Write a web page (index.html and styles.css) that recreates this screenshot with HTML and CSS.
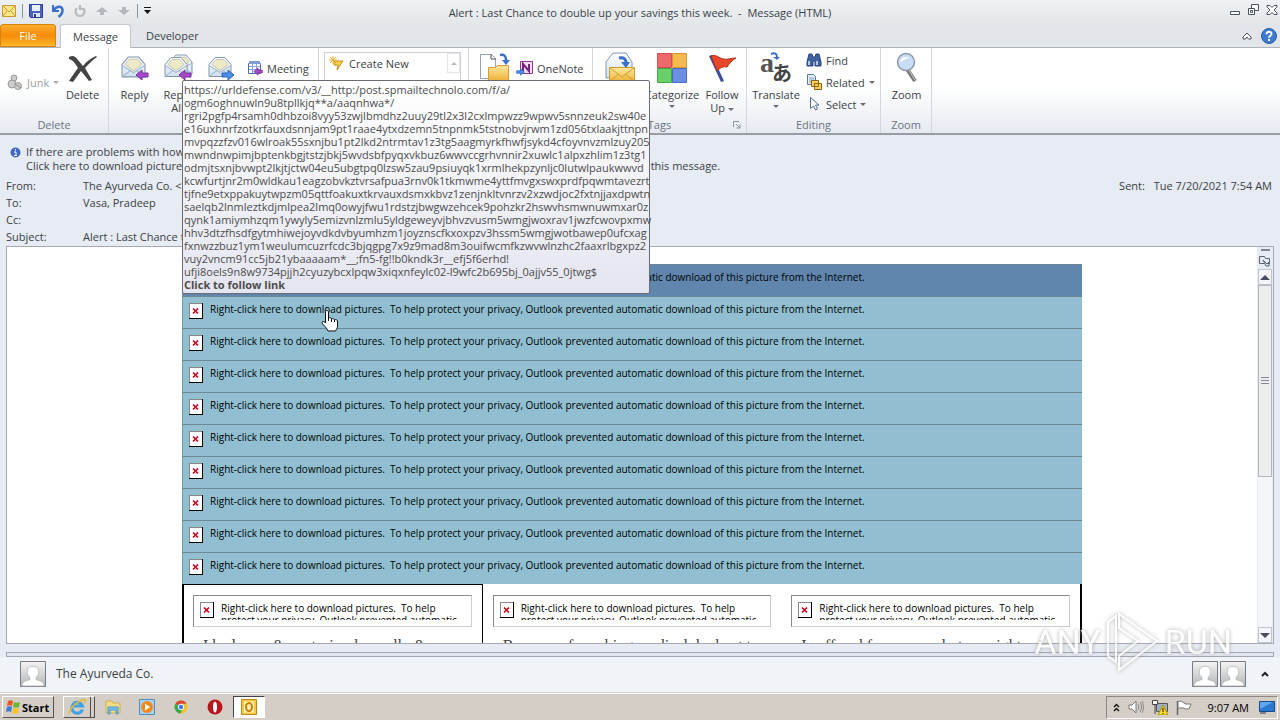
FILE: index.html
```html
<!DOCTYPE html>
<html lang="en">
<head>
    <meta charset="utf-8">
    <title>Alert : Last Chance to double up your savings this week. - Message (HTML)</title>
    <link rel="stylesheet" href="styles.css">
</head>
<body>

    <!-- Shared icons -->
    <svg class="defs" width="0" height="0">
        <defs>
            <linearGradient id="paper" x1="0" y1="0" x2="0" y2="1"><stop offset="0" stop-color="#fff"/><stop offset="1" stop-color="#cfdff0"/></linearGradient>
            <linearGradient id="gold" x1="0" y1="0" x2="0" y2="1"><stop offset="0" stop-color="#ffe9a0"/><stop offset="1" stop-color="#eeb138"/></linearGradient>
            <linearGradient id="person-bg" x1="0" y1="0" x2="0" y2="1"><stop offset="0" stop-color="#f4f4f4"/><stop offset="1" stop-color="#b4b5b8"/></linearGradient>
            <symbol id="envelope" viewBox="0 0 24 24">
                <path d="M1 9 7 2h10l6 7v12H1z" fill="url(#paper)" stroke="#8196ad"/>
                <path d="M4 9 8 4h8l4 5-8 6z" fill="#eee9c6" stroke="#b8b8a0" stroke-width=".7"/>
                <path d="M1 10l11 7 11-7M1 21l8-6M23 21l-8-6" fill="none" stroke="#9cb0c6"/>
            </symbol>
            <symbol id="arrow-left" viewBox="0 0 14 12"><path d="M1 6l6-5v3h6v4H7v3z" fill="#a64bc8" stroke="#7b2fa0"/></symbol>
            <symbol id="arrow-right" viewBox="0 0 14 12"><path d="M13 6 7 1v3H1v4h6v3z" fill="#4b8ee6" stroke="#2b62b8"/></symbol>
            <symbol id="person" viewBox="0 0 26 26">
                <path d="M.5.5h25v25H.5z" fill="url(#person-bg)" stroke="#777b82"/>
                <path d="M2 25c0-5 4-5 8-6.500v-2C7 14 7 11 7.500 9 8.500 4 17.500 4 18.500 9c.5 2 .5 5-2.500 7.500v2c4 1.500 8 1.500 8 6.500z" fill="#fff" stroke="#aaa" stroke-width=".7"/>
            </symbol>
            <symbol id="broken" viewBox="0 0 14 16">
                <path d="M0 0h14v16H0z" fill="#000"/><path d="M0 0h13v15H0z" fill="#888"/><path d="M1 1h12v14H1z" fill="#fff"/>
                <path d="M4 5.500l5 5M9 5.500l-5 5" stroke="#d0021b" stroke-width="1.700"/>
            </symbol>
        </defs>
    </svg>

    <!-- Title bar -->
    <header class="titlebar">
        <div class="quick-access">
            <svg width="14" height="12" viewBox="0 0 14 12"><path d="M.5.5h13v11H.5z" fill="#ffe58a" stroke="#c99a2e"/><path d="M1 1l6 6 6-6M1 11l4-5M13 11 9 6" fill="none" stroke="#c99a2e"/></svg>
            <span class="bar"></span>
            <button aria-label="Save"><svg width="14" height="14" viewBox="0 0 14 14"><path d="M.5.5h13v13h-12l-1-1z" fill="#4a62c4" stroke="#2b3d96"/><path d="M3 1h8v6H3z" fill="#e8f0fb"/><path d="M4 9h7v4H4z" fill="#dfe4f2"/><path d="M5 10h2v3H5z" fill="#2b3d96"/></svg></button>
            <button aria-label="Undo"><svg width="14" height="14" viewBox="0 0 14 14"><path d="M2 1v6h6" fill="none" stroke="#3a6fcb" stroke-width="2"/><path d="M2.500 6.500C5 2 11 1 11.500 6c.3 3-1.500 5-4 7" fill="none" stroke="#3a6fcb" stroke-width="2.500"/></svg></button>
            <button aria-label="Redo"><svg width="14" height="14" viewBox="0 0 14 14"><path d="M4 4C1 7 3 12 7 12s6-5 3-8M7 1v4h5" fill="none" stroke="#bbb" stroke-width="2.200"/></svg></button>
            <button aria-label="Previous item"><svg width="14" height="10" viewBox="0 0 14 10"><path d="M7 1l6 5H9v3H5V6H1z" fill="#b4b7bb"/></svg></button>
            <button aria-label="Next item"><svg width="14" height="10" viewBox="0 0 14 10"><path d="M7 9l6-5H9V1H5v3H1z" fill="#b4b7bb"/></svg></button>
            <span class="bar"></span>
            <button class="customize" aria-label="Customize"><svg width="7" height="8" viewBox="0 0 7 8"><path d="M0 0h7v1H0zM0 3h7L3.500 7z" fill="#111"/></svg></button>
        </div>
        <h1>Alert : Last Chance to double up your savings this week. &nbsp;- &nbsp;Message (HTML)</h1>
        <div class="window-buttons">
            <button aria-label="Minimize"><svg width="12" height="12" viewBox="0 0 12 12"><path d="M1.500 7.500h9v3h-9z" fill="#fff" stroke="#4c535c"/></svg></button>
            <button aria-label="Restore"><svg width="13" height="12" viewBox="0 0 13 12"><path d="M4.500.5h7v6h-7z" fill="#fff" stroke="#4c535c"/><path d="M1.500 4.500h6v6h-6zM3.500 6.500h2v2h-2z" fill="#fff" stroke="#4c535c"/></svg></button>
            <button aria-label="Close"><svg width="12" height="12" viewBox="0 0 12 12"><path d="M1 1.500h3l2 2 2-2h3v1.500L8 6l3 3v1.500H8l-2-2-2 2H1V9l3-3-3-3z" fill="#fff" stroke="#4c535c"/></svg></button>
        </div>
    </header>

    <!-- Tabs -->
    <nav class="tabs">
        <button class="file">File</button>
        <button class="active">Message</button>
        <button class="developer">Developer</button>
        <div class="help">
            <svg width="10" height="8" viewBox="0 0 10 8"><path d="M1 5l4-4 4 4v2H6.500L5 5 3.500 7H1z" fill="#fff" stroke="#4c535c"/></svg>
            <svg width="16" height="16" viewBox="0 0 16 16"><circle cx="8" cy="8" r="7.500" fill="#3f7bd0" stroke="#285aa5"/><path d="M5.500 6.200C5.500 3 10.500 3 10.500 6c0 1.800-2.500 1.800-2.500 3.800M8 11v2" fill="none" stroke="#fff" stroke-width="1.900"/></svg>
        </div>
    </nav>

    <!-- Ribbon -->
    <section class="ribbon">
        <div class="group g-delete">
            <div class="tools">
                <button class="small junk"><svg width="16" height="16" viewBox="0 0 16 16"><g fill="#ccc" stroke="#999"><circle cx="7" cy="4" r="3"/><circle cx="5" cy="10" r="4"/><circle cx="11" cy="12" r="3.500"/></g><path d="M8 10l6 4" stroke="#888"/></svg>Junk <i class="caret"></i></button>
                <button class="large"><svg width="32" height="32" viewBox="0 0 32 32"><path d="M2 5c4-2 6-1 9 3l5 6c4-5 8-8 13-10l1 1c-5 3-8 7-12 11l7 12-3 1-8-10-8 11-4-1c3-5 6-9 9-13C8 11 6 8 2 7z" fill="#444"/></svg>Delete</button>
            </div>
            <div class="caption">Delete</div>
        </div>
        <div class="group g-respond">
            <div class="tools">
                <button class="large"><svg width="32" height="32" viewBox="0 0 32 32"><use href="#envelope" x="2" y="3" width="25" height="25"/><use href="#arrow-left" x="16" y="17" width="14" height="12"/></svg>Reply</button>
                <button class="large"><svg width="32" height="32" viewBox="0 0 32 32"><use href="#envelope" x="7" y="1" width="24" height="24"/><use href="#envelope" x="2" y="3" width="24" height="25"/><use href="#arrow-left" x="16" y="17" width="14" height="12"/></svg>Reply<br>All</button>
                <button class="large"><svg width="32" height="32" viewBox="0 0 32 32"><use href="#envelope" x="3" y="3" width="24" height="25"/><use href="#arrow-right" x="16" y="17" width="14" height="12"/></svg>Forward</button>
                <button class="small meeting"><svg width="16" height="16" viewBox="0 0 16 16"><path d="M1.500 3.500h12v10h-12z" fill="#fff" stroke="#4c6fae"/><path d="M2 6.500h11M2 9.500h11M5.500 4v9M9.500 4v9" stroke="#8aa6d4"/><path d="M2 1h11v3H2z" fill="#7f9cd0"/><use href="#arrow-left" x="6" y="7" width="10" height="9"/></svg>Meeting</button>
            </div>
            <div class="caption">Respond</div>
        </div>
        <div class="group g-quick">
            <div class="tools">
                <div class="gallery">
                    <button class="small"><svg width="16" height="16" viewBox="0 0 16 16"><path d="M5 6h9l-6 9 1-5H5z" fill="#f6cf4a" stroke="#c98e1c"/><path d="M4 1v8M0 5h8M1 2l6 6M7 2 1 8" stroke="#e6b22c"/></svg>Create New</button>
                    <button class="up" aria-label="Scroll up"><i class="caret"></i></button>
                </div>
            </div>
            <div class="caption">Quick Steps</div>
        </div>
        <div class="group g-move">
            <div class="tools">
                <button class="large"><svg width="32" height="32" viewBox="0 0 32 32"><path d="M1.500 2.500h11l4 4v20h-15z" fill="#fff" stroke="#93a3b5"/><path d="M12 2v5h5" fill="none" stroke="#555"/><path d="M9.500 15.500h7l2-2h11v15h-20z" fill="url(#gold)" stroke="#dc9a3a"/><path d="M21 3c4-1 6 1 6 5" fill="none" stroke="#3a6fcb" stroke-width="2.500"/><path d="M23 8h8l-4 5z" fill="#3a6fcb"/></svg>Move</button>
                <button class="small"><svg width="17" height="16" viewBox="0 0 17 16"><path d="M4.500 1.500h12v12h-12z" fill="#f4dcf0" stroke="#8c3c94"/><path d="M7 11V4l6 7V4" fill="none" stroke="#7a2282" stroke-width="2"/><use href="#arrow-right" x="0" y="8" width="9" height="8"/></svg>OneNote</button>
            </div>
            <div class="caption">Move</div>
        </div>
        <div class="group g-tags">
            <div class="tools">
                <button class="large"><svg width="32" height="32" viewBox="0 0 32 32"><path d="M2 10 9 1h13l6 9v16H2z" fill="url(#paper)" stroke="#8196ad"/><path d="M5.500 15.500h25v14h-25z" fill="url(#gold)" stroke="#d29b29"/><path d="M6 16l12 9 12-9M6 29l9-7M30 29l-9-7" fill="none" stroke="#d29b29"/><path d="M15 6c5-1 7 1 7 5" fill="none" stroke="#3a6fcb" stroke-width="3"/><path d="M17 10h9l-4 6z" fill="#3a6fcb"/></svg>Unread</button>
                <button class="large"><svg width="32" height="32" viewBox="0 0 32 32"><path d="M1.500 1.500h14v14h-14z" fill="#ee6a6a" stroke="#d14b50"/><path d="M16.500 1.500h14v14h-14z" fill="#f5b951" stroke="#dc9526"/><path d="M1.500 16.500h14v14h-14z" fill="#6bd06c" stroke="#41a845"/><path d="M16.500 16.500h14v14h-14z" fill="#6c8fe4" stroke="#4769c9"/></svg>Categorize<i class="caret"></i></button>
                <button class="large"><svg width="32" height="32" viewBox="0 0 32 32"><path d="M3 4l3-1 12 26-3 1z" fill="#394e9c"/><path d="M5 4c5-2 8 2 12 3 5 1 8-1 13-1-4 2-7 6-9 9-4-1-7 1-10 4z" fill="#e8482a" stroke="#b02c17"/></svg>Follow<span>Up <i class="caret"></i></span></button>
            </div>
            <div class="caption">Tags</div>
            <svg class="launcher" width="8" height="8" viewBox="0 0 8 8"><path d="M.5 6V.5H6M3 3l4 4M7 3.500V7H3.500" fill="none" stroke="#8a9099"/></svg>
        </div>
        <div class="group g-editing">
            <div class="tools">
                <button class="large"><svg width="32" height="32" viewBox="0 0 32 32"><text x="0" y="20" class="glyph-a">a</text><text x="12" y="29" class="glyph-kana">あ</text><path d="M11 2c4-2 6 0 6 3" fill="none" stroke="#3a6fcb" stroke-width="2"/><path d="M13 5h7l-3 3z" fill="#3a6fcb"/></svg>Translate<i class="caret"></i></button>
                <div class="stack">
                    <button class="small"><svg width="16" height="16" viewBox="0 0 16 16"><path d="M3 2h3l1 3h2l1-3h3l2 8v4H9V9H7v5H1v-4z" fill="#40619f" stroke="#2a447c"/><path d="M3 9v4M11 9v4" stroke="#dbe6f7" stroke-width="1.500"/></svg>Find</button>
                    <button class="small"><svg width="16" height="16" viewBox="0 0 16 16"><path d="M1.500.5h6l2 2v8h-8z" fill="#e6effa" stroke="#5878ac"/><path d="M3 4h5M3 6h5M3 8h4" stroke="#7f9bc8"/><path d="M5.500 6.500h7v6h-7zM8.500 9.500h7v6h-7z" fill="#f7d05c" stroke="#8c6412"/></svg>Related <i class="caret"></i></button>
                    <button class="small"><svg width="16" height="16" viewBox="0 0 16 16"><path d="M4.500 1.500v11l3-2.500 2 4 2-1-2-4h3.500z" fill="#fff" stroke="#566b92"/></svg>Select <i class="caret"></i></button>
                </div>
            </div>
            <div class="caption">Editing</div>
        </div>
        <div class="group g-zoom">
            <div class="tools">
                <button class="large"><svg width="32" height="32" viewBox="0 0 32 32"><path d="M16 17l8 12" stroke="#777" stroke-width="4"/><path d="M17 17l7 11" stroke="#ccc"/><circle cx="15" cy="10" r="8.500" fill="#c9def5" stroke="#8e99a8" stroke-width="1.500"/><path d="M9 10c1-5 6-6 9-4-3 0-5 3-9 4z" fill="#fff"/></svg>Zoom</button>
            </div>
            <div class="caption">Zoom</div>
        </div>
    </section>

    <!-- Message header -->
    <section class="message-header">
        <div class="info">
            <svg width="11" height="11" viewBox="0 0 11 11"><circle cx="5.500" cy="5.500" r="5" fill="#3c6ac4"/><path d="M5.500 2v1.500M4 5h2v3.500M4 8.500h3" fill="none" stroke="#fff"/></svg>
            <p>If there are problems with how this message is displayed, click here to view it in a web browser.<br>Click here to download pictures. To help protect your privacy, Outlook prevented automatic download of some pictures in this message.</p>
        </div>
        <dl class="fields">
            <dt>From:</dt><dd>The Ayurveda Co. &lt;</dd>
            <dt>To:</dt><dd>Vasa, Pradeep</dd>
            <dt>Cc:</dt><dd></dd>
            <dt>Subject:</dt><dd>Alert : Last Chance to double up your savings this week.</dd>
        </dl>
        <p class="sent"><span>Sent:</span> Tue 7/20/2021 7:54 AM</p>
    </section>

    <!-- Message body -->
    <main class="message">
        <div class="page">
            <div class="banner">
                <a href="#"><svg width="14" height="16"><use href="#broken"/></svg>Right-click here to download pictures.&nbsp; To help protect your privacy, Outlook prevented automatic download of this picture from the Internet.</a>
                <a href="#"><svg width="14" height="16"><use href="#broken"/></svg>Right-click here to download pictures.&nbsp; To help protect your privacy, Outlook prevented automatic download of this picture from the Internet.</a>
                <a href="#"><svg width="14" height="16"><use href="#broken"/></svg>Right-click here to download pictures.&nbsp; To help protect your privacy, Outlook prevented automatic download of this picture from the Internet.</a>
                <a href="#"><svg width="14" height="16"><use href="#broken"/></svg>Right-click here to download pictures.&nbsp; To help protect your privacy, Outlook prevented automatic download of this picture from the Internet.</a>
                <a href="#"><svg width="14" height="16"><use href="#broken"/></svg>Right-click here to download pictures.&nbsp; To help protect your privacy, Outlook prevented automatic download of this picture from the Internet.</a>
                <a href="#"><svg width="14" height="16"><use href="#broken"/></svg>Right-click here to download pictures.&nbsp; To help protect your privacy, Outlook prevented automatic download of this picture from the Internet.</a>
                <a href="#"><svg width="14" height="16"><use href="#broken"/></svg>Right-click here to download pictures.&nbsp; To help protect your privacy, Outlook prevented automatic download of this picture from the Internet.</a>
                <a href="#"><svg width="14" height="16"><use href="#broken"/></svg>Right-click here to download pictures.&nbsp; To help protect your privacy, Outlook prevented automatic download of this picture from the Internet.</a>
                <a href="#"><svg width="14" height="16"><use href="#broken"/></svg>Right-click here to download pictures.&nbsp; To help protect your privacy, Outlook prevented automatic download of this picture from the Internet.</a>
                <a href="#"><svg width="14" height="16"><use href="#broken"/></svg>Right-click here to download pictures.&nbsp; To help protect your privacy, Outlook prevented automatic download of this picture from the Internet.</a>
            </div>
            <div class="columns">
                <article>
                    <div class="placeholder"><svg width="14" height="16"><use href="#broken"/></svg><p>Right-click here to download pictures.&nbsp; To help<br>protect your privacy, Outlook prevented automatic</p></div>
                    <p class="quote">I had acne &amp; post-pimple, really &amp;</p>
                </article>
                <article>
                    <div class="placeholder"><svg width="14" height="16"><use href="#broken"/></svg><p>Right-click here to download pictures.&nbsp; To help<br>protect your privacy, Outlook prevented automatic</p></div>
                    <p class="quote">Because of combing medical, had cut to</p>
                </article>
                <article>
                    <div class="placeholder"><svg width="14" height="16"><use href="#broken"/></svg><p>Right-click here to download pictures.&nbsp; To help<br>protect your privacy, Outlook prevented automatic</p></div>
                    <p class="quote">I suffered from razor, but my right sai</p>
                </article>
            </div>
        </div>
        <div class="scrollbar">
            <span class="split"></span>
            <svg class="browse" width="12" height="12" viewBox="0 0 12 12"><path d="M.5 1.500h5l1 2h4v5H9M.5 1.500v7h5M4 5l3 6h3V7L8 9z" fill="none" stroke="#5b6370"/></svg>
            <button aria-label="Scroll up"><i class="caret up"></i></button>
            <div class="track"><div class="thumb"></div></div>
            <button aria-label="Scroll down"><i class="caret"></i></button>
        </div>
    </main>

    <!-- People pane -->
    <div class="splitter"></div>
    <footer class="people">
        <svg width="26" height="26"><use href="#person"/></svg>
        <span class="name">The Ayurveda Co.</span>
        <svg width="26" height="26"><use href="#person"/></svg>
        <svg width="26" height="26"><use href="#person"/></svg>
        <button aria-label="Expand"><svg width="8" height="6" viewBox="0 0 8 6"><path d="M1 5l3-3 3 3" fill="none" stroke="#222" stroke-width="2"/></svg></button>
    </footer>

    <!-- Taskbar -->
    <div class="taskbar">
        <button class="start"><svg width="16" height="15" viewBox="0 0 16 15"><path d="M3 1c2-1 3-1 5 0L7 6C5 5 4 5 2 6z" fill="#e8542b"/><path d="M9 2c2 1 4 1 6 0l-1 5c-2 1-4 1-6 0z" fill="#6fb52f"/><path d="M2 7c2-1 3-1 5 0l-1 5c-2-1-3-1-5 0z" fill="#3b78d8"/><path d="M8 8c2 1 4 1 6 0l-1 5c-2 1-4 1-6 0z" fill="#f6c32c"/></svg>Start</button>
        <button class="task raised" aria-label="Internet Explorer"><svg width="18" height="18" viewBox="0 0 18 18"><path d="M14.500 11.500A5.500 5.500 0 1 1 14.500 8H5" fill="none" stroke="#3ea3e4" stroke-width="3"/><path d="M2 16C-1 14 8 3 16 1.500c3 0 0 4 0 4" fill="none" stroke="#e9b92c" stroke-width="1.500"/></svg></button>
        <button class="task" aria-label="Explorer"><svg width="18" height="18" viewBox="0 0 18 18"><path d="M2 3h6l1 2h7v10H2z" fill="#f4dd86" stroke="#d0ad4c"/><path d="M4 16V9h10v7h-2v-4H6v4z" fill="#76bfe8" stroke="#4c98c8"/></svg></button>
        <button class="task" aria-label="Media Player"><svg width="18" height="18" viewBox="0 0 18 18"><path d="M1.500 1.500h15v15h-15z" fill="#a8d3f2" stroke="#4b8fc7"/><circle cx="9" cy="9" r="6" fill="#f08a1c"/><path d="M7 5.500l5 3.500-5 3.500z" fill="#fff"/></svg></button>
        <button class="task" aria-label="Chrome"><svg width="18" height="18" viewBox="0 0 18 18"><circle cx="9" cy="9" r="6.500" fill="#f2c51d"/><path d="M9 9 3.400 5.700A6.500 6.500 0 0 1 14.700 5.800H9z" fill="#dd4738"/><path d="M9 9 3.400 5.700A6.500 6.500 0 0 0 8.500 15.500L11 10z" fill="#36a553"/><circle cx="9" cy="9" r="2.800" fill="#3d7de4" stroke="#fff"/></svg></button>
        <button class="task" aria-label="Opera"><svg width="18" height="18" viewBox="0 0 18 18"><circle cx="9" cy="9" r="7.500" fill="#b9161c"/><ellipse cx="9" cy="9" rx="2" ry="5.500" fill="#fff"/></svg></button>
        <button class="task pressed" aria-label="Outlook"><svg width="18" height="18" viewBox="0 0 18 18"><path d="M1.500 1.500h15v15h-15z" fill="#f5c945" stroke="#bf8714"/><path d="M4 3.500h10v11H4z" fill="#fdeeb0"/><ellipse cx="9" cy="9" rx="3" ry="4" fill="none" stroke="#c98208" stroke-width="2"/></svg></button>
        <div class="tray">
            <svg width="7" height="9" viewBox="0 0 7 9"><path d="M1 4l2.500-2.500L6 4M1 8l2.500-2.500L6 8" fill="none" stroke="#111" stroke-width="1.400"/></svg>
            <svg width="16" height="14" viewBox="0 0 16 14"><path d="M1 5h3l4-4v12L4 9H1z" fill="#fff" stroke="#777"/><path d="M10 4c1 2 1 4 0 6M12 2c2 3 2 7 0 10M14 1c2 4 2 8 0 12" fill="none" stroke="#888"/></svg>
            <svg width="16" height="15" viewBox="0 0 16 15"><path d="M4.500 3.500h11v8h-11z" fill="#9fb2c4" stroke="#555"/><path d="M.5.5h5v4h-5zM3 4v10" fill="#fff" stroke="#444"/><path d="M11 5l5 10H6z" fill="#ffdf2e" stroke="#ab8b00"/><path d="M11 8v4M11 13v1" stroke="#111"/></svg>
            <svg width="16" height="15" viewBox="0 0 16 15"><path d="M1.500 1v14" stroke="#666" stroke-width="1.500"/><path d="M2 1.500c3-1 4 0 6 1.500h1v1h6l-2 5H9L8 8H2z" fill="#fff" stroke="#777"/></svg>
            <time>9:07 AM</time>
            <svg width="16" height="13" viewBox="0 0 16 13"><path d="M.5.5h15v10H.5z" fill="#2a78d0" stroke="#154a8b"/><path d="M1 1h13L1 8z" fill="#62a8ee"/><path d="M1 12h6" stroke="#335"/></svg>
        </div>
    </div>

    <!-- Link tooltip -->
    <div class="tooltip" role="tooltip">
        https://urldefense.com/v3/__http:/post.spmailtechnolo.com/f/a/<br>
        ogm6oghnuwln9u8tpllkjq**a/aaqnhwa*/<br>
        rgri2pgfp4rsamh0dhbzoi8vyy53zwjlbmdhz2uuy29tl2x3l2cxlmpwzz9wpwv5snnzeuk2sw40e<br>
        e16uxhnrfzotkrfauxdsnnjam9pt1raae4ytxdzemn5tnpnmk5tstnobvjrwm1zd056txlaakjttnpn<br>
        mvpqzzfzv016wlroak55sxnjbu1pt2lkd2ntrmtav1z3tg5aagmyrkfhwfjsykd4cfoyvnvzmlzuy205<br>
        mwndnwpimjbptenkbgjtstzjbkj5wvdsbfpyqxvkbuz6wwvccgrhvnnir2xuwlc1alpxzhlim1z3tg1<br>
        odmjtsxnjbvwpt2lkjtjctw04eu5ubgtpq0lzsw5zau9psiuyqk1xrmlhekpzynljc0lutwlpaukwwvd<br>
        kcwfurtjnr2m0wldkau1eagzobvkztvrsafpua3rnv0k1tkmwme4yttfmvgxswxprdfpqwmtavezrt<br>
        tjfne9etxppakuytwpzm05qttfoakuxtkrvauxdsmxkbvz1zenjnkltvnrzv2xzwdjoc2fxtnjjaxdpwtn<br>
        saelqb2lnmleztkdjmlpea2lmq0owyjfwu1rdstzjbwgwzehcek9pohzkr2hswvhsmwnuwmxar0z<br>
        qynk1amiymhzqm1ywyly5emizvnlzmlu5yldgeweyvjbhvzvusm5wmgjwoxrav1jwzfcwovpxmw<br>
        hhv3dtzfhsdfgytmhiwejoyvdkdvbyumhzm1joyznscfkxoxpzv3hssm5wmgjwotbawep0ufcxag<br>
        fxnwzzbuz1ym1weulumcuzrfcdc3bjqgpg7x9z9mad8m3ouifwcmfkzwvwlnzhc2faaxrlbgxpz2<br>
        vuy2vncm91cc5jb21ybaaaaam*__;fn5-fg!!b0kndk3r__efj5f6erhd!<br>
        ufji8oels9n8w9734pjjh2cyuzybcxlpqw3xiqxnfeylc02-l9wfc2b695bj_0ajjv55_0jtwg$<br>
        <strong>Click to follow link</strong>
    </div>

    <!-- Mouse pointer -->
    <svg class="pointer" width="17" height="22" viewBox="0 0 17 22"><path d="M4.500 13V2c0-2 3-2 3 0v6c1-1 3 0 3 1 1-1 3 0 3 1 1-1 3 0 3 1v5c0 2-1 3-2 5H7c-1-3-4-5-6-8 0-2 2-2 3.500 0z" fill="#fff" stroke="#111"/><path d="M7.500 8v3M10.500 9v3M13.500 10v2" stroke="#111"/></svg>

    <div class="watermark">
        <span>ANY</span>
        <svg width="54" height="64" viewBox="0 0 54 64"><path d="M2 12l8-6v46l-8-6zM13 4l38 27-38 29V46l19-15-19-13z" fill="none" stroke="#fff" stroke-width="2"/></svg>
        <span>RUN</span>
    </div>

</body>
</html>
```

FILE: styles.css
```css
* {
    box-sizing: border-box;
}
body {
    margin: 0;
    height: 100vh;
    display: flex;
    flex-direction: column;
    overflow: hidden;
    background: #e7ebf3;
    color: #3b3f46;
    font-family: "Open Sans", "Noto Sans", "Noto Sans CJK JP", sans-serif;
    font-size: 11px;
    line-height: 13px;
}
h1, p, dl, dd {
    margin: 0;
}
button {
    font: inherit;
    color: inherit;
    background: none;
    border: 0;
    padding: 0;
}
svg {
    display: block;
    flex-shrink: 0;
}
.defs {
    position: absolute;
}
.caret {
    display: inline-block;
    border: 3px solid transparent;
    border-top-color: #6a6e75;
    border-bottom: 0;
    vertical-align: middle;
}

/* title bar */
.titlebar {
    flex: none;
    display: grid;
    grid-template-columns: 1fr auto 1fr;
    align-items: center;
    height: 24px;
    background: linear-gradient(#eff2f5, #e3e7ea);
}
.titlebar h1 {
    font-size: 11px;
    font-weight: normal;
}
.quick-access {
    display: flex;
    align-items: center;
    gap: 8px;
    padding: 0 0 2px 2px;
}
.quick-access .bar {
    width: 1px;
    height: 14px;
    margin: 0 -2px;
    background: #8e949b;
}
.window-buttons {
    display: flex;
    justify-content: flex-end;
    gap: 6px;
    padding: 0 2px 5px 0;
}

/* tabs */
.tabs {
    flex: none;
    display: flex;
    height: 24px;
    background: #e2e6ea;
    border-bottom: 1px solid #adb2ba;
}
.tabs button {
    font-size: 11px;
}
.tabs .file {
    width: 56px;
    border: 1px solid #d9820c;
    border-radius: 3px 3px 0 0;
    background: linear-gradient(#fbad2c, #f68b08 50%, #fdb92c);
    color: #fff;
}
.tabs .active {
    width: 71px;
    margin: 0 0 -1px 4px;
    border: 1px solid #c2c7ce;
    border-bottom: 0;
    border-radius: 3px 3px 0 0;
    background: #fff;
}
.tabs .developer {
    padding: 0 15px;
}
.help {
    display: flex;
    align-items: center;
    gap: 9px;
    margin-left: auto;
    padding-right: 3px;
}

/* ribbon */
.ribbon {
    flex: none;
    display: flex;
    height: 87px;
    background: linear-gradient(#fff 45%, #e6eaf1);
    border-bottom: 2px solid #979ca5;
}
.group {
    position: relative;
    display: flex;
    flex-direction: column;
    justify-content: space-between;
    border-right: 1px solid #d3d7dd;
    padding: 4px 4px 2px;
}
.g-delete { width: 109px; }
.g-respond { width: 210px; }
.g-quick { width: 150px; }
.g-move { width: 124px; }
.g-tags { width: 154px; }
.g-editing { width: 134px; }
.g-zoom { width: 51px; }
.tools {
    display: flex;
    align-items: flex-start;
}
.caption {
    text-align: center;
    color: #6a737e;
}
.g-tags .caption {
    padding-right: 20px;
}
.launcher {
    position: absolute;
    right: 5px;
    bottom: 4px;
}
.large {
    flex: none;
    display: flex;
    flex-direction: column;
    align-items: center;
    min-width: 43px;
}
.large svg {
    margin-bottom: 4px;
}
.large > .caret {
    margin-top: 4px;
}
.small {
    display: flex;
    align-items: center;
    gap: 4px;
    height: 22px;
    white-space: nowrap;
}
.junk {
    width: 57px;
    margin-top: 19px;
    padding-left: 3px;
    color: #9a9da2;
}
.junk .caret {
    border-top-color: #aaa;
}
.g-respond .small, .g-move .small {
    margin-top: 5px;
}
.g-respond .small {
    margin-left: 5px;
}
.gallery {
    display: flex;
    width: 137px;
    height: 70px;
    margin-left: 1px;
    padding-left: 4px;
    border: 1px solid #ccd0d7;
    background: #fff;
}
.gallery .small {
    height: 20px;
}
.gallery .up {
    width: 13px;
    height: 20px;
    margin-left: auto;
    border: 1px solid #e2e4e8;
}
.gallery .up .caret {
    display: block;
    width: 0;
    margin: auto;
    transform: rotate(180deg);
    border-top-color: #b5b8bd;
}
.g-move .large {
    min-width: 43px;
}
.g-tags .large {
    min-width: 46px;
}
.g-tags .large:nth-child(2) {
    width: 58px;
}
.g-tags .large:nth-child(3) {
    width: 42px;
    min-width: 42px;
}
.g-editing .large {
    width: 50px;
}
.stack {
    margin: -3px 0 0 5px;
}
.glyph-a {
    font: bold 28px "Liberation Serif", serif;
    fill: #555;
}
.glyph-kana {
    font: bold 20px "Noto Sans CJK JP", sans-serif;
    fill: #444;
}

/* message header */
.message-header {
    position: relative;
    flex: none;
    padding: 10px 8px 1px 6px;
    background: #e7ebf3;
}
.info {
    display: flex;
    gap: 5px;
    padding-left: 4px;
    line-height: 14px;
}
.info svg {
    margin-top: 2px;
}
.info p {
    white-space: nowrap;
}
.fields {
    display: grid;
    grid-template-columns: 77px 1fr;
    grid-auto-rows: 17px;
    margin-top: 4px;
    line-height: 17px;
}
.sent {
    position: absolute;
    right: 8px;
    top: 44px;
}
.sent span {
    margin-right: 6px;
}

/* message body */
.message {
    flex: 1;
    min-height: 0;
    display: flex;
    margin: 0 6px;
    border: 1px solid #a4a9b3;
    background: #fff;
    overflow: hidden;
}
.page {
    width: 900px;
    margin: 17px auto 0;
    color: #000;
}
.banner a {
    display: flex;
    align-items: flex-start;
    gap: 7px;
    height: 32px;
    padding: 6px 6px 0;
    border-top: 1px solid #6f8795;
    border-left: 1px solid #7a99a8;
    background: #91bfd1;
    color: #000;
    text-decoration: none;
    white-space: nowrap;
}
.banner a:first-child {
    background: #6086ae;
}
.banner a, .placeholder {
    font-size: 10px;
}
.columns {
    display: grid;
    grid-template-columns: repeat(3, 1fr);
    border-left: 2px solid #000;
    border-right: 2px solid #000;
}
.columns article {
    padding: 11px 10px 0;
}
.columns article:first-child {
    border-top: 1px solid #000;
    border-right: 1px solid #000;
    padding: 10px 10px 0 9px;
}
.placeholder {
    display: flex;
    gap: 7px;
    height: 32px;
    padding: 6px;
    border: 1px solid #8a8a8a;
    border-right-color: #ccc;
    border-bottom-color: #ccc;
}
.placeholder p {
    height: 18px;
    line-height: 12px;
    overflow: hidden;
    white-space: nowrap;
}
.quote {
    margin-top: 9px;
    padding-left: 10px;
    font: 16px/20px "Liberation Serif", serif;
    color: #444;
    white-space: nowrap;
}

/* scrollbar */
.scrollbar {
    width: 16px;
    display: flex;
    flex-direction: column;
    align-items: center;
    background: #e7ebf3;
}
.split {
    width: 9px;
    height: 2px;
    margin: 2px 0 4px;
    background: #81868f;
}
.browse {
    margin-bottom: 2px;
}
.scrollbar button {
    width: 14px;
    height: 16px;
    border: 1px solid #bfc4cd;
    background: #f3f5fa;
}
.scrollbar .caret {
    display: block;
    margin: auto;
    width: 0;
    border-width: 5px 5px 0;
    border-top-color: #484d5c;
}
.scrollbar .up {
    transform: rotate(180deg);
}
.track {
    flex: 1;
    width: 14px;
    background: #f4f5f8;
}
.thumb {
    height: 56%;
    border: 1px solid #b3b8bf;
    background: repeating-linear-gradient(#868b91 0 1px, transparent 1px 3px) center / 8px 7px no-repeat, #ebedee;
}

/* people pane */
.splitter {
    flex: none;
    height: 5px;
    margin: 8px 6px 0;
    border: 1px solid #a0a5b2;
    background: #e3e6ef;
}
.people {
    flex: none;
    display: flex;
    align-items: center;
    gap: 2px;
    height: 36px;
    padding: 0 11px 2px 20px;
    background: #f0f3f7;
    border-bottom: 1px solid #d4d4d0;
}
.people .name {
    margin: 0 auto 0 8px;
    font-size: 12px;
}
.people button {
    margin-left: 13px;
}

/* taskbar */
.taskbar {
    flex: none;
    display: flex;
    align-items: center;
    height: 27px;
    padding: 1px 2px;
    border-top: 1px solid #fff;
    background: #d5cec6;
    color: #000;
}
.start {
    display: flex;
    align-items: center;
    gap: 1px;
    width: 52px;
    height: 22px;
    margin-right: 9px;
    padding-left: 2px;
    font-weight: bold;
}
.start, .raised {
    border: 1px solid;
    border-color: #fff #55504b #55504b #fff;
}
.task {
    display: grid;
    place-items: center;
    width: 32px;
    height: 22px;
    margin-right: 2px;
}
.raised {
    padding-right: 4px;
    box-shadow: inset -3px 0 #d5cec6, inset -4px 0 #55504b;
}
.pressed {
    border: 1px solid;
    border-color: #444 #fff #fff #444;
    background: #fff;
}
.tray {
    display: flex;
    align-items: center;
    gap: 8px;
    height: 23px;
    margin-left: auto;
    padding: 0 2px 0 6px;
    border: 1px solid;
    border-color: #8d8882 #fff #fff #8d8882;
}
.tray time {
    margin: 0 2px 0 8px;
}

/* over the window */
.tooltip {
    position: absolute;
    left: 182px;
    top: 80px;
    width: 468px;
    padding: 2px 0 2px 1px;
    border: 1px solid #6b6b73;
    border-radius: 2px;
    background: linear-gradient(#fff, #e4e5f0);
    color: #4c4c4c;
    white-space: nowrap;
}
.pointer {
    position: absolute;
    left: 321px;
    top: 310px;
}
.watermark {
    position: absolute;
    right: 48px;
    bottom: 46px;
    display: flex;
    align-items: center;
    gap: 5px;
    color: #fff;
    font: 34px Roboto, sans-serif;
    opacity: .8;
    filter: drop-shadow(0 0 2px #999);
}
```
